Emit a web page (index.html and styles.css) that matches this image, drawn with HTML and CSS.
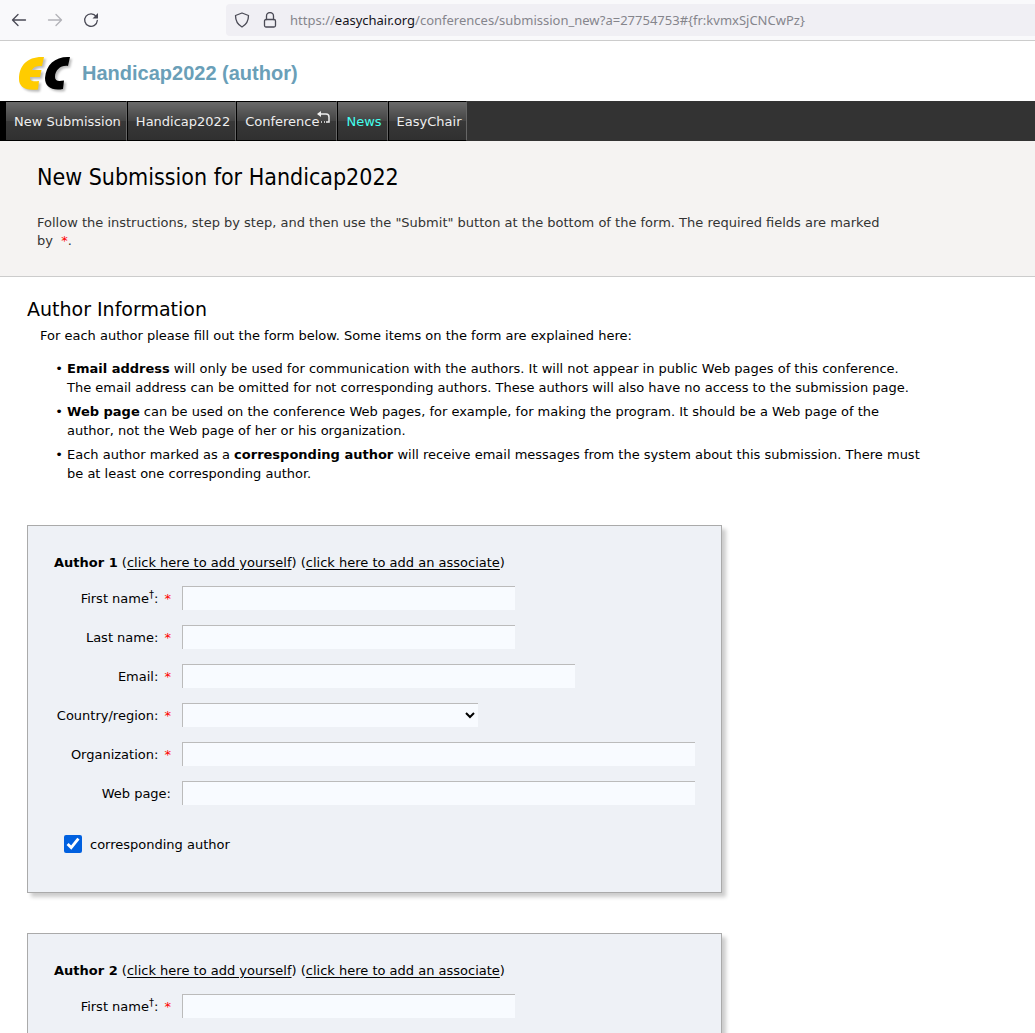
FILE: index.html
```html
<!DOCTYPE html>
<html lang="en">
<head>
    <meta charset="UTF-8">
    <meta name="viewport" content="width=device-width, initial-scale=1.0">
    <title>New Submission for Handicap2022</title>
    <link rel="stylesheet" href="styles.css">
</head>
<body>
    <div class="browser-bar">
        <button class="nav-button" type="button" aria-label="Back">
            <svg width="16" height="16" viewBox="0 0 16 16"><path d="M14.500 8H1.500M7 2.500L1.500 8L7 13.500"/></svg>
        </button>
        <button class="nav-button" type="button" aria-label="Forward" disabled>
            <svg width="16" height="16" viewBox="0 0 16 16"><path d="M1.500 8h13M9 2.500L14.500 8L9 13.500"/></svg>
        </button>
        <button class="nav-button" type="button" aria-label="Reload">
            <svg width="16" height="16" viewBox="0 0 16 16"><path d="M13.200 4.500A6.300 6.300 0 1 0 14.300 8.500"/><path class="solid" d="M15 1v5.500H9.500z"/></svg>
        </button>
        <div class="address">
            <svg width="16" height="16" viewBox="0 0 16 16"><path d="M8 1L14.500 3.500C14.500 9 12.500 12.500 8 15C3.500 12.500 1.500 9 1.500 3.500z"/></svg>
            <svg width="16" height="16" viewBox="0 0 16 16"><rect x="2.500" y="7.500" width="11" height="7.500" rx="1.500"/><path d="M4.500 7.500V4a3.500 3.500 0 0 1 7 0v3.500"/></svg>
            <span class="url">https://<span class="domain">easychair.org</span>/conferences/submission_new?a=27754753#{fr:kvmxSjCNCwPz}</span>
        </div>
    </div>

    <div class="page">
        <header class="header">
            <svg class="logo" width="56" height="40" viewBox="0 0 56 40">
                <path class="logo-e" d="M26 4L24 13C20 13 16 13 14 17L23.500 17L22 24L12 24C12 28 14 29 21 28L20 36.500C6 38 1 33 1 26C1 12 10 3 26 4z"/>
                <path class="logo-c" d="M52 4L50 13C43 12 37 17 37 24C37 28 40 28.500 46 27.500L45 36C34 38 27 34 27 25C28 11 38 3 52 4z"/>
            </svg>
            <span class="conference">Handicap2022 (author)</span>
        </header>

        <nav class="menu">
            <a href="#">New Submission</a>
            <a href="#">Handicap2022</a>
            <a href="#">Conference<svg class="switch" width="14" height="14" viewBox="0 0 14 14"><path d="M1 3H9Q12 3 12 6V11H9"/><path class="head" d="M4 0V6L0 3z"/><path d="M7 11h1M4 11h1"/></svg></a>
            <a class="news" href="#">News</a>
            <a href="#">EasyChair</a>
        </nav>

        <section class="intro">
            <h1>New Submission for Handicap2022</h1>
            <p>Follow the instructions, step by step, and then use the "Submit" button at the bottom of the form. The required fields are marked<br>by &nbsp;<span class="required">*</span>.</p>
        </section>

        <main class="content">
            <h2>Author Information</h2>
            <p class="lead">For each author please fill out the form below. Some items on the form are explained here:</p>
            <ul class="notes">
                <li><b>Email address</b> will only be used for communication with the authors. It will not appear in public Web pages of this conference.<br>The email address can be omitted for not corresponding authors. These authors will also have no access to the submission page.</li>
                <li><b>Web page</b> can be used on the conference Web pages, for example, for making the program. It should be a Web page of the<br>author, not the Web page of her or his organization.</li>
                <li>Each author marked as a <b>corresponding author</b> will receive email messages from the system about this submission. There must<br>be at least one corresponding author.</li>
            </ul>

            <form class="author">
                <p class="author-title"><b>Author 1</b> (<a href="#">click here to add yourself</a>) (<a href="#">click here to add an associate</a>)</p>
                <div class="fields">
                    <label for="first1">First name<sup>†</sup>: <span class="required">*</span></label>
                    <input class="name" type="text" id="first1">
                    <label for="last1">Last name: <span class="required">*</span></label>
                    <input class="name" type="text" id="last1">
                    <label for="email1">Email: <span class="required">*</span></label>
                    <input class="email" type="email" id="email1">
                    <label for="country1">Country/region: <span class="required">*</span></label>
                    <select class="country" id="country1"><option></option></select>
                    <label for="org1">Organization: <span class="required">*</span></label>
                    <input class="wide" type="text" id="org1">
                    <label for="web1">Web page:</label>
                    <input class="wide" type="text" id="web1">
                </div>
                <div class="corresponding">
                    <input type="checkbox" id="corr1" checked>
                    <label for="corr1">corresponding author</label>
                </div>
            </form>

            <form class="author">
                <p class="author-title"><b>Author 2</b> (<a href="#">click here to add yourself</a>) (<a href="#">click here to add an associate</a>)</p>
                <div class="fields">
                    <label for="first2">First name<sup>†</sup>: <span class="required">*</span></label>
                    <input class="name" type="text" id="first2">
                </div>
            </form>
        </main>
    </div>
</body>
</html>
```
FILE: styles.css
```css
* {
    box-sizing: border-box;
}

body {
    margin: 0;
    height: 100vh;
    display: flex;
    flex-direction: column;
    overflow: hidden;
    background: #fff;
    color: #000;
    font-family: Verdana, 'DejaVu Sans', sans-serif;
    font-size: 13px;
}

/* browser toolbar */
.browser-bar {
    display: flex;
    align-items: center;
    flex-shrink: 0;
    height: 41px;
    padding-left: 11px;
    gap: 20px;
    background: #f9f9fb;
    border-bottom: 1px solid #ccc;
}

.browser-bar svg {
    flex-shrink: 0;
    fill: none;
    stroke: #4a4a55;
    stroke-width: 1.3;
    stroke-linecap: round;
    stroke-linejoin: round;
}

.browser-bar .solid {
    fill: #4a4a55;
    stroke: none;
}

.nav-button {
    display: flex;
    padding: 0;
    border: none;
    background: none;
}

.nav-button:disabled {
    opacity: 0.4;
}

.address {
    flex: 1;
    display: flex;
    align-items: center;
    gap: 12px;
    height: 32px;
    margin-left: 107px;
    padding-left: 8px;
    background: #f0eff4;
    border-radius: 4px 0 0 4px;
}

.url {
    font-family: 'Noto Sans', sans-serif;
    font-size: 13px;
    color: #85858c;
    white-space: nowrap;
}

.domain {
    color: #15141a;
}

/* page */
.page {
    flex: 1;
    min-height: 0;
    overflow: hidden;
}

.header {
    display: flex;
    align-items: center;
    gap: 8px;
    height: 60px;
    padding: 4px 18px 0;
}

.logo {
    filter: drop-shadow(2px 2px 1px #bbb);
}

.logo-e {
    fill: #fc0;
}

.conference {
    font-family: Arial, 'Liberation Sans', sans-serif;
    font-size: 20px;
    font-weight: bold;
    color: #6a9fb8;
}

.menu {
    display: flex;
    height: 40px;
    padding-left: 5px;
    background: linear-gradient(to right, #000 5px, #333 5px);
}

.menu a {
    display: flex;
    align-items: center;
    padding: 0 5px 0 8px;
    border: 1px solid #000;
    border-right-color: #666;
    background: linear-gradient(#6a6a6a, #444 50%, #383838 50%, #303030);
    color: #eee;
    text-decoration: none;
}

.menu .news {
    color: #4fe;
}

.switch {
    align-self: flex-start;
    margin-top: 9px;
    margin-left: -2px;
    fill: none;
    stroke: #eee;
    stroke-width: 1.5;
}

.switch .head {
    fill: #eee;
    stroke: none;
}

.intro {
    padding: 22px 37px 26px;
    background: #f5f3f2;
    border-bottom: 1px solid #ccc;
    color: #333;
}

h1 {
    margin: 0 0 23px;
    font-family: Tahoma, 'DejaVu Sans Condensed', 'Noto Sans', sans-serif;
    font-size: 23px;
    font-weight: normal;
    line-height: 28px;
    color: #000;
}

.intro p {
    margin: 0;
    line-height: 18px;
}

.required {
    color: #f00;
}

.content {
    padding: 20px 27px;
}

h2 {
    margin: 0 0 5px;
    font-size: 19px;
    font-weight: normal;
    line-height: 24px;
}

.lead {
    margin: 0 0 14px 13px;
    line-height: 19px;
}

.notes {
    margin: 0 0 42px;
    padding-left: 40px;
    line-height: 19px;
    list-style-type: "• ";
}

.notes li {
    margin-bottom: 5px;
}

/* author box */
.author {
    width: fit-content;
    min-width: 695px;
    margin-bottom: 40px;
    padding: 27px 26px 39px;
    background: #eef1f6;
    border: 1px solid #aaa;
    box-shadow: 4px 4px 4px #ccc;
}

.author-title {
    margin: 0 0 13px;
    line-height: 20px;
}

.author-title a {
    color: #000;
    text-underline-offset: 2px;
}

.fields {
    display: grid;
    grid-template-columns: 117px auto;
    justify-items: start;
    align-items: center;
    gap: 15px 11px;
}

.fields label {
    justify-self: end;
    padding-top: 2px;
    white-space: nowrap;
    line-height: 22px;
}

.fields .required {
    margin-left: 2px;
}

sup {
    font-size: 10px;
    line-height: 0;
}

.fields input,
.fields select {
    height: 24px;
    border: 1px solid #bbb;
    border-right: none;
    border-bottom: none;
    border-radius: 0;
    background-color: #f8fbff;
}

.name {
    width: 333px;
}

.email {
    width: 393px;
}

.country {
    width: 296px;
    padding-right: 3px;
}

.wide {
    width: 513px;
}

.corresponding {
    display: flex;
    align-items: center;
    gap: 8px;
    margin: 30px 0 0 10px;
}

.corresponding input {
    width: 18px;
    height: 18px;
    margin: 0;
    accent-color: #0060df;
}
```
